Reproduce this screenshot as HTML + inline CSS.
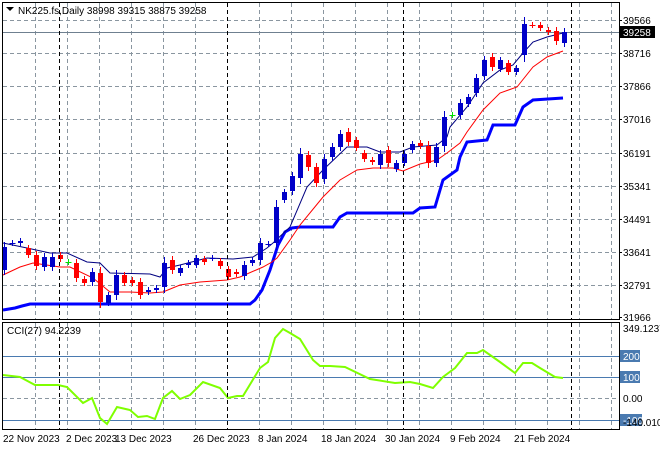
<!DOCTYPE html><html><head><meta charset="utf-8"><style>
body{margin:0;background:#fff;width:660px;height:450px;overflow:hidden;font-family:"Liberation Sans",sans-serif}
svg text{font-family:"Liberation Sans",sans-serif;font-size:10px}
</style></head><body>
<svg id="s" width="660" height="450" xmlns="http://www.w3.org/2000/svg">
<rect width="660" height="450" fill="#fff"/>
<g id="grid" stroke="#8a96a0" stroke-dasharray="4,3" stroke-width="1"></g>
<line x1="3" y1="32.5" x2="619" y2="32.5" stroke="#6f8090"/>
<g id="cci" stroke="#4a7ab0"><line x1="3" y1="356.5" x2="619" y2="356.5"/><line x1="3" y1="377.5" x2="619" y2="377.5"/><line x1="3" y1="420.5" x2="619" y2="420.5"/></g>
<polyline fill="none" stroke="#0000ff" stroke-width="3" points="3,310 15,308 22,306 30,304 250,304 255,300 262,290 270,270 278,245 285,232 292,228 300,227 333,227 340,217 347,213 413,213 420,208 435,207 440,190 443,180 457,170 460,157 467,142 487,140 493,125 515,125 523,107 533,100 563,98"/>
<polyline fill="none" stroke="#ff0000" stroke-width="1" points="3,275 20,267 33,263 60,267 70,267 93,278 110,292 130,292 150,293 163,292 180,285 200,282 227,280 240,277 263,267 272,262 277,258 290,240 300,225 323,197 340,180 357,170 373,168 393,168 403,171 420,164 437,160 447,153 460,143 467,132 483,110 500,93 517,87 533,67 547,57 563,51"/>
<polyline fill="none" stroke="#000080" stroke-width="1" points="3,243 27,248 50,253 67,253 87,262 100,263 110,273 150,274 160,277 167,268 180,265 207,258 233,259 253,257 267,248 273,243 290,227 307,187 323,170 347,147 367,147 380,152 400,152 413,147 437,145 447,137 450,127 467,107 483,83 500,70 513,65 523,53 533,42 547,37 563,33"/>
<g id="c"></g>
<polyline fill="none" stroke="#7fff00" stroke-width="2" points="3,375 20,377 35,385 58,385 67,387 83,403 92,398 100,418 107,424 117,407 130,410 138,417 147,416 155,419 163,398 172,391 180,399 190,395 203,382 220,388 228,398 237,396 243,396 260,368 268,362 275,338 283,329 290,333 300,339 313,360 320,366 330,366 345,367 370,379 395,383 410,382 420,384 433,388 443,377 455,368 467,353 477,353 483,350 500,362 515,373 523,363 532,363 540,368 555,377 563,378"/>
<rect x="2.5" y="2.5" width="617" height="317" fill="none" stroke="#000"/>
<rect x="2.5" y="322.5" width="617" height="107" fill="none" stroke="#000"/>
<polygon points="6,7 14,7 10,11" fill="#000"/>
<text x="18" y="14" fill="#000">NK225.fs,Daily  38998 39315 38875 39258</text>
<text x="7" y="334" fill="#000">CCI(27) 94.2239</text>
<g id="ax" fill="#000"></g>
<rect x="620" y="26" width="35" height="12" fill="#000"/>
<text x="623" y="36" fill="#fff">39258</text>
<rect x="620" y="350" width="20" height="12" fill="#4a7ab0"/><text x="623" y="360" fill="#fff">200</text>
<rect x="620" y="371" width="20" height="12" fill="#4a7ab0"/><text x="623" y="381" fill="#fff">100</text>
<text x="623" y="402">0.00</text>
<rect x="620" y="414" width="22" height="12" fill="#4a7ab0"/><text x="623" y="424" fill="#fff">-100</text>
<text x="623" y="426">-140.010</text>
<text x="623" y="332">349.1237</text>
</svg>
<script>
var ns="http://www.w3.org/2000/svg",g=document.getElementById('grid'),S=document.getElementById('s');
function el(p,t,a){var e=document.createElementNS(ns,t);for(var k in a)e.setAttribute(k,a[k]);p.appendChild(e);return e}
var hy=[20,53,86,119,153,186,219,252,285];
hy.forEach(function(y){el(g,'line',{x1:3,x2:619,y1:y+.5,y2:y+.5})});
el(g,'line',{x1:3,x2:619,y1:398.5,y2:398.5});
for(var x=35;x<619;x+=32){el(g,'line',{x1:x+.5,x2:x+.5,y1:3,y2:319});el(g,'line',{x1:x+.5,x2:x+.5,y1:323,y2:429})}
[59,227,403,571].forEach(function(x){el(S,'line',{x1:x+.5,x2:x+.5,y1:3,y2:319,stroke:'#000','stroke-dasharray':'4,3'});el(S,'line',{x1:x+.5,x2:x+.5,y1:323,y2:429,stroke:'#000','stroke-dasharray':'4,3'})});
S.insertBefore(g,S.children[1]);
var lab=['39566','38716','37866','37016','36191','35341','34491','33641','32791','31966'],ly=[20,53,86,119,153,186,219,252,285,317];
var ax=document.getElementById('ax');
lab.forEach(function(t,i){var e=el(ax,'text',{x:623,y:ly[i]+4});e.textContent=t;el(S,'line',{x1:619,x2:622,y1:ly[i]+.5,y2:ly[i]+.5,stroke:'#000'})});
var d=[['22 Nov 2023',3],['2 Dec 2023',66],['13 Dec 2023',115],['26 Dec 2023',193],['8 Jan 2024',258],['18 Jan 2024',321],['30 Jan 2024',385],['9 Feb 2024',450],['21 Feb 2024',514]];
d.forEach(function(a){var e=el(ax,'text',{x:a[1],y:442});e.textContent=a[0]});
var C=[[3,247,270,'b'],[11,243,243,'b'],[19,241,243,'b'],[27,248,255,'r'],[35,255,266,'r'],[43,257,267,'b'],[51,257,267,'b'],[59,255,259,'r'],[67,262,262,'g'],[75,263,278,'r'],[83,279,283,'r'],[91,272,282,'b'],[99,273,302,'r'],[107,295,303,'b'],[115,275,295,'b'],[123,275,283,'r'],[131,280,283,'r'],[139,282,295,'r'],[147,290,292,'b'],[155,288,290,'b'],[163,263,287,'b'],[171,260,270,'r'],[179,268,273,'b'],[187,263,265,'b'],[195,258,265,'b'],[203,259,262,'r'],[211,258,258,'b'],[219,261,266,'r'],[227,269,277,'r'],[235,272,274,'r'],[243,265,276,'b'],[251,260,263,'b'],[259,243,260,'b'],[267,244,244,'b'],[275,207,243,'b'],[283,192,200,'b'],[291,176,191,'b'],[299,154,178,'b'],[307,155,167,'r'],[315,167,183,'r'],[323,159,179,'b'],[331,147,157,'b'],[339,134,147,'b'],[347,132,142,'r'],[355,140,148,'r'],[363,153,159,'r'],[371,160,162,'r'],[379,154,165,'b'],[387,150,163,'r'],[395,163,169,'b'],[403,154,163,'b'],[411,144,150,'b'],[419,143,146,'r'],[427,146,163,'r'],[435,147,163,'b'],[443,117,146,'b'],[451,115,115,'g'],[459,103,115,'b'],[467,97,104,'b'],[475,78,93,'b'],[483,60,76,'b'],[491,57,67,'r'],[499,60,69,'b'],[507,63,72,'r'],[515,68,72,'b'],[523,24,55,'b'],[531,25,25,'r'],[539,25,28,'r'],[547,30,32,'r'],[555,31,41,'r'],[563,32,43,'b']];
var cg=document.getElementById('c'),col={b:'#0000c8',r:'#ff0000',g:'#00e000'};
C.forEach(function(c){var x=c[0]+1.5,k=col[c[3]],w=Math.max(3,Math.round((c[2]-c[1])*0.15)+2);
el(cg,'line',{x1:x,x2:x,y1:c[1]-w,y2:c[2]+w,stroke:k});
if(c[2]-c[1]<2)el(cg,'line',{x1:x-3,x2:x+3,y1:c[1]+.5,y2:c[1]+.5,stroke:k});
else el(cg,'rect',{x:x-2.5,y:c[1],width:5,height:c[2]-c[1],fill:k});});
</script>
</body></html>
